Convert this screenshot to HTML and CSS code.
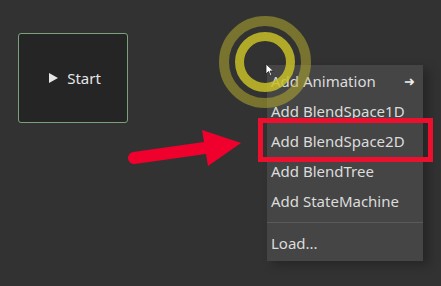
FILE: index.html
```html
<!DOCTYPE html>
<html lang="en">
<head>
    <meta charset="UTF-8">
    <title>AnimationTree</title>
    <link rel="stylesheet" href="styles.css">
</head>
<body>
    <div class="graph">
        <div class="node start-node">
            <span class="play"></span>
            <span>Start</span>
        </div>

        <ul class="popup-menu">
            <li class="menu-item">Add Animation <span class="submenu-arrow">&#10140;</span></li>
            <li class="menu-item">Add BlendSpace1D</li>
            <li class="menu-item">Add BlendSpace2D</li>
            <li class="menu-item">Add BlendTree</li>
            <li class="menu-item">Add StateMachine</li>
            <li class="separator"></li>
            <li class="menu-item">Load...</li>
        </ul>

        <svg class="click-rings" width="100" height="100" viewBox="0 0 100 100">
            <circle cx="50" cy="50" r="41" fill="none" stroke="rgba(190,182,45,0.5)" stroke-width="10"/>
            <circle cx="50" cy="50" r="25.5" fill="none" stroke="rgba(200,192,40,0.85)" stroke-width="9"/>
        </svg>

        <svg class="cursor" width="10" height="14" viewBox="0 0 10 14">
            <path d="M1 1 L1 11 L3.5 8.5 L5.5 13 L7 12.3 L5 8 L8.5 8 Z" fill="#fff" stroke="#222" stroke-width="0.8"/>
        </svg>

        <div class="highlight-box"></div>

        <svg class="red-arrow" width="130" height="50" viewBox="0 0 130 50">
            <line x1="12" y1="38" x2="90" y2="27" stroke="#f0002c" stroke-width="12" stroke-linecap="round"/>
            <polygon points="80,10 119,23 86,46" fill="#f0002c"/>
        </svg>
    </div>
</body>
</html>
```

FILE: styles.css
```css
body {
    margin: 0;
    background: #323232;
    font-family: "Noto Sans", "Open Sans", sans-serif;
    color: #dcdcdc;
    overflow: hidden;
}

.graph {
    position: relative;
    width: 441px;
    height: 286px;
}

.node {
    position: absolute;
    box-sizing: border-box;
    display: flex;
    align-items: center;
    justify-content: center;
    gap: 9px;
    background: #252525;
    border: 1px solid #7aa27a;
    border-radius: 3px;
}

.start-node {
    left: 18px;
    top: 33px;
    width: 110px;
    height: 90px;
    font-size: 15px;
    color: #e6e6e6;
    padding-left: 4px;
}

.play {
    width: 0;
    height: 0;
    border-left: 9px solid #e6e6e6;
    border-top: 5px solid transparent;
    border-bottom: 5px solid transparent;
}

.click-rings {
    position: absolute;
    left: 215px;
    top: 12px;
}

.popup-menu {
    position: absolute;
    left: 267px;
    top: 65px;
    width: 156px;
    margin: 0;
    padding: 1px 0 3px;
    list-style: none;
    background: #454545;
    box-shadow: 6px 4px 10px rgba(0, 0, 0, 0.25);
    font-size: 15px;
}

.menu-item {
    display: flex;
    align-items: center;
    justify-content: space-between;
    height: 30px;
    padding: 0 8px 0 4px;
}

.submenu-arrow {
    font-size: 13px;
    color: #eee;
}

.separator {
    height: 1px;
    margin: 6px 0 5px;
    background: #5a5a5a;
}

.cursor {
    position: absolute;
    left: 265px;
    top: 63px;
}

.highlight-box {
    position: absolute;
    left: 258px;
    top: 118px;
    width: 175px;
    height: 44px;
    box-sizing: border-box;
    border: 5px solid #ec0f2e;
}

.red-arrow {
    position: absolute;
    left: 122px;
    top: 120px;
}
```
